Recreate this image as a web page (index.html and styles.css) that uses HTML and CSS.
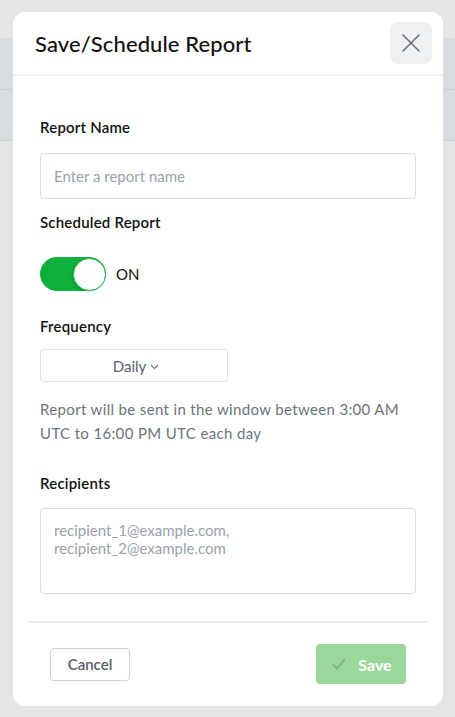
FILE: index.html
```html
<!DOCTYPE html>
<html lang="en">
<head>
<meta charset="utf-8">
<title>Save/Schedule Report</title>
<link rel="stylesheet" href="styles.css">
</head>
<body>
<div class="backdrop">
  <div class="bd-top"></div>
  <div class="bd-band"></div>
  <div class="bd-band"></div>
  <div class="bd-rest"></div>
</div>
<div class="modal">
  <div class="modal-header">
    <h1 class="modal-title">Save/Schedule Report</h1>
    <button class="close-btn" aria-label="Close">
      <svg width="18" height="18" viewBox="0 0 18 18"><path d="M1 1L17 17M17 1L1 17" stroke="#6b7079" stroke-width="1.6" fill="none" stroke-linecap="round"/></svg>
    </button>
  </div>
  <div class="modal-body">
    <div class="label">Report Name</div>
    <div class="input"><span class="placeholder">Enter a report name</span></div>
    <div class="label label-sched">Scheduled Report</div>
    <div class="toggle-row">
      <div class="toggle"><div class="knob"></div></div>
      <span class="toggle-text">ON</span>
    </div>
    <div class="label label-freq">Frequency</div>
    <div class="select">Daily<svg class="chev" width="9" height="6" viewBox="0 0 9 6"><path d="M1 1L4.5 4.5L8 1" stroke="#6b7079" stroke-width="1.1" fill="none"/></svg></div>
    <p class="help">Report will be sent in the window between 3:00 AM UTC to 16:00 PM UTC each day</p>
    <div class="label label-rec">Recipients</div>
    <div class="textarea"><span class="placeholder">recipient_1@example.com,<br>recipient_2@example.com</span></div>
  </div>
  <div class="modal-footer">
    <button class="btn btn-cancel">Cancel</button>
    <button class="btn btn-save">
      <svg width="14" height="12" viewBox="0 0 14 12"><path d="M1 6.5L5 10.5L13 1" stroke="#7eaa80" stroke-width="1.6" fill="none"/></svg>
      <span>Save</span>
    </button>
  </div>
</div>
</body>
</html>
```

FILE: styles.css
```css
* { box-sizing: border-box; }
html, body { margin: 0; padding: 0; }
body {
  width: 455px;
  height: 717px;
  overflow: hidden;
  background: #e4e4e4;
  font-family: Lato, "Open Sans", "Liberation Sans", sans-serif;
  position: relative;
}
.backdrop { display: flex; flex-direction: column; height: 717px; }
.bd-top { height: 38px; background: #e6e6e6; }
.bd-band { height: 52px; background: #d8dce0; border-bottom: 1px solid #c9cdd1; }
.bd-band + .bd-band { height: 51px; }
.bd-rest { flex: 1; background: #e4e4e4; }

.modal {
  position: absolute;
  left: 13px;
  top: 12px;
  width: 430px;
  height: 694px;
  background: #fff;
  border-radius: 12px;
  display: flex;
  flex-direction: column;
}
.modal-header {
  display: flex;
  align-items: center;
  justify-content: space-between;
  padding: 10px 11px 10px 22px;
  border-bottom: 2px solid #f2f3f4;
}
.modal-title {
  margin: 0;
  font-size: 22px;
  font-weight: 500;
  color: #111;
  letter-spacing: 0.1px;
}
.close-btn {
  width: 42px;
  height: 42px;
  border: none;
  border-radius: 8px;
  background: #eff0f2;
  display: flex;
  align-items: center;
  justify-content: center;
  padding: 0;
}
.modal-body {
  padding: 41px 27px 0;
  display: flex;
  flex-direction: column;
}
.label {
  font-size: 15px;
  line-height: 20px;
  font-weight: 600;
  color: #111;
  letter-spacing: 0.2px;
}
.input {
  margin-top: 16px;
  height: 46px;
  border: 1px solid #dcdee1;
  border-radius: 4px;
  padding: 0 13px;
  display: flex;
  align-items: center;
}
.placeholder {
  font-size: 15px;
  color: #9ba1a9;
}
.label-sched { margin-top: 13px; }
.toggle-row {
  margin-top: 25px;
  display: flex;
  align-items: center;
  gap: 10px;
}
.toggle {
  width: 66px;
  height: 34px;
  border-radius: 17px;
  background: #0cb03b;
  display: flex;
  justify-content: flex-end;
  align-items: center;
  padding: 0 0.5px;
}
.knob {
  width: 33px;
  height: 33px;
  border-radius: 50%;
  background: #fff;
  border: 1px solid #27b84c;
  box-shadow: -1px 1px 2px rgba(0,0,0,0.12);
}
.toggle-text {
  font-size: 15px;
  color: #111;
}
.label-freq { margin-top: 25px; }
.select {
  margin-top: 13px;
  width: 188px;
  height: 33px;
  border: 1px solid #e0e2e6;
  border-radius: 3px;
  display: flex;
  align-items: center;
  justify-content: center;
  gap: 4px;
  font-size: 15px;
  color: #59616b;
  padding-left: 4px;
}
.chev { margin-top: 2px; }
.help {
  margin: 15px 0 0;
  font-size: 15px;
  line-height: 24px;
  color: #6d737b;
  letter-spacing: 0.35px;
}
.label-rec { margin-top: 28px; }
.textarea {
  margin-top: 15px;
  height: 86px;
  border: 1px solid #dcdee1;
  border-radius: 4px;
  padding: 12px 13px;
  line-height: 18px;
}
.modal-footer {
  margin: 27px 16px 0;
  border-top: 2px solid #eeeff0;
  padding: 0 21px;
  display: flex;
  justify-content: space-between;
  align-items: center;
  height: 84px;
}
.btn {
  font-family: inherit;
  font-size: 15px;
  border-radius: 4px;
  display: flex;
  align-items: center;
  justify-content: center;
}
.btn-cancel {
  width: 80px;
  height: 33px;
  border: 1px solid #cdd0d4;
  background: #fff;
  color: #565e68;
  font-weight: 600;
}
.btn-save {
  width: 90px;
  height: 40px;
  border: none;
  background: #9bd69a;
  color: #fff;
  font-weight: 700;
  font-size: 16px;
  gap: 12px;
  padding-right: 4px;
}
```
